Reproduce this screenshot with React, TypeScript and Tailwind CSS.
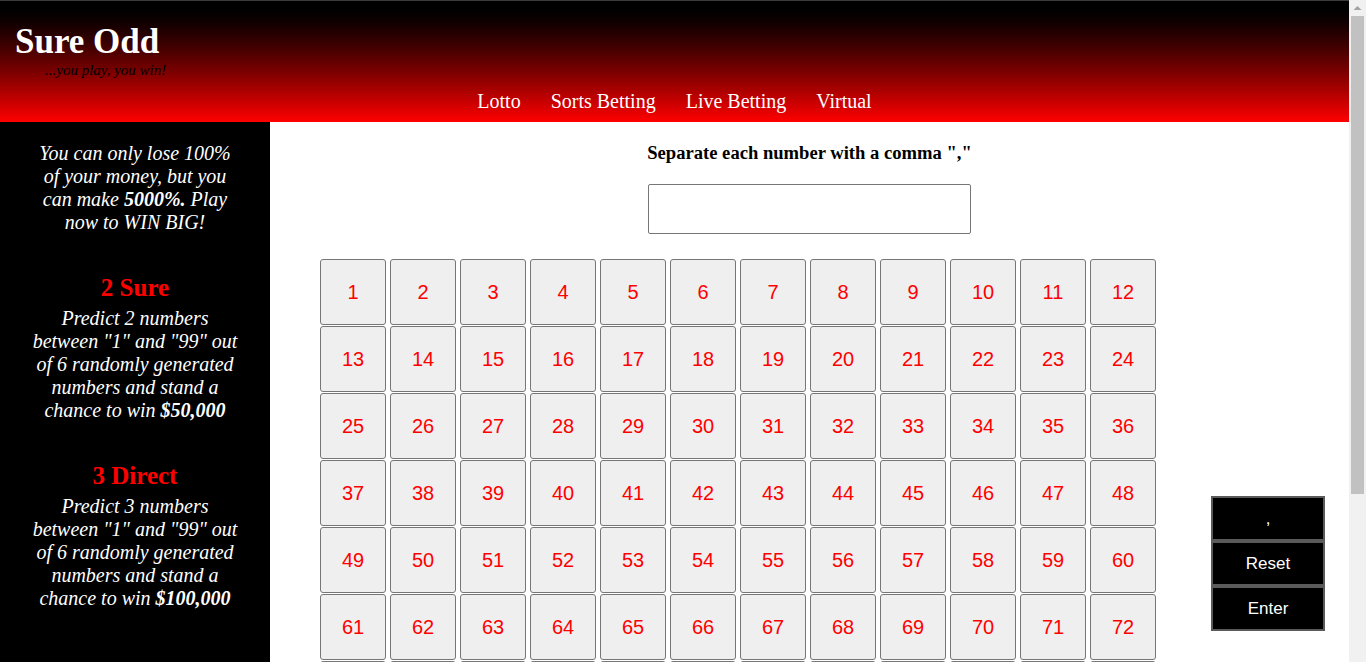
import React from 'react';

const serif = { fontFamily: '"Liberation Serif", "Times New Roman", serif' };
const sans = { fontFamily: '"Liberation Sans", Arial, sans-serif' };

const navItems = ['Lotto', 'Sorts Betting', 'Live Betting', 'Virtual'];
const numbers = Array.from({ length: 99 }, (_, i) => i + 1);

function Promo({ title, count, prize, top }: { title: string; count: number; prize: string; top: string }) {
  return (
    <div className={top}>
      <h2 className="text-[25px] font-bold leading-[30px] text-[#ff0000]">{title}</h2>
      <p className="mt-[4px] italic text-[20px] leading-[23px] text-white">
        Predict {count} numbers between "1" and "99" out of 6 randomly generated numbers and stand a chance to win{' '}
        <b>{prize}</b>
      </p>
    </div>
  );
}

function Scrollbar() {
  return (
    <div className="w-[17px] shrink-0 bg-[#f1f1f1] flex flex-col items-center">
      <svg width="17" height="16" viewBox="0 0 17 16" className="shrink-0">
        <path d="M4.5 10 L8.5 6 L12.5 10 Z" fill="#a3a3a3" />
      </svg>
      <div className="w-[13px] h-[478px] bg-[#c1c1c1]" />
    </div>
  );
}

export default function App() {
  return (
    <div className="h-screen overflow-hidden flex bg-white" style={serif}>
      <div className="flex-1 min-w-0">
        <header className="h-[122px] border-t border-[#3b3b3b] bg-gradient-to-b from-black to-[#ff0000]">
          <div className="pl-[15px] pt-[22px]">
            <h1 className="text-[35px] font-bold leading-[38px] text-white">Sure Odd</h1>
            <p className="ml-[30px] mt-[1px] italic text-[15px] leading-[17px] text-black">...you play, you win!</p>
          </div>
          <nav className="flex justify-center mt-[10px]">
            {navItems.map((item) => (
              <a key={item} href="#" className="px-[15px] text-[20px] leading-[25px] text-white">
                {item}
              </a>
            ))}
          </nav>
        </header>

        <div className="flex">
          <aside className="w-[270px] shrink-0 bg-black text-center pt-[20px] pb-[60px]">
            <div className="w-[212px] mx-auto">
              <p className="italic text-[20px] leading-[23px] text-white">
                You can only lose 100% of your money, but you can make <b>5000%.</b> Play now to WIN BIG!
              </p>
              <Promo title="2 Sure" count={2} prize="$50,000" top="mt-[39px]" />
              <Promo title="3 Direct" count={3} prize="$100,000" top="mt-[39px]" />
            </div>
          </aside>

          <main className="flex-1 pb-[24px]">
            <div className="flex flex-col items-center pt-[20px]">
              <p className="text-[18.6px] font-bold leading-[22px] text-black">Separate each number with a comma ","</p>
              <input
                type="text"
                className="mt-[20px] w-[323px] h-[50px] border border-[#767676] rounded-[2px] bg-white outline-none"
              />
            </div>

            <div className="flex mt-[25px] pl-[50px]">
              <div className="grid grid-cols-[repeat(12,66px)] gap-x-[4px] gap-y-[1px] content-start" style={sans}>
                {numbers.map((n) => (
                  <button
                    key={n}
                    className="h-[66px] w-[66px] border border-[#767676] rounded-[3px] bg-[#efefef] text-[20px] text-[#ff0000]"
                  >
                    {n}
                  </button>
                ))}
              </div>

              <div className="ml-[55px] mt-[237px] flex flex-col w-[114px]" style={sans}>
                {[',', 'Reset', 'Enter'].map((label) => (
                  <button
                    key={label}
                    className="h-[45px] bg-black border-2 border-[#5a5a5a] text-[17px] text-white"
                  >
                    {label}
                  </button>
                ))}
              </div>
            </div>
          </main>
        </div>
      </div>
      <Scrollbar />
    </div>
  );
}
